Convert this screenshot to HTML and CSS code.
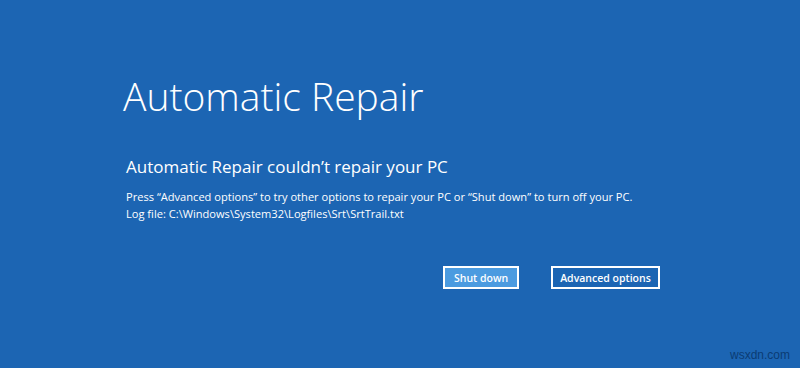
FILE: index.html
```html
<!DOCTYPE html>
<html>
<head>
<meta charset="utf-8">
<link rel="stylesheet" href="styles.css">
</head>
<body>
<main class="screen">
  <h1 class="title">Automatic Repair</h1>
  <h2 class="subtitle">Automatic Repair couldn’t repair your PC</h2>
  <p class="body">Press “Advanced options” to try other options to repair your PC or “Shut down” to turn off your PC.<br>Log file: C:\Windows\System32\Logfiles\Srt\SrtTrail.txt</p>
  <div class="actions">
    <button class="btn btn-primary">Shut down</button>
    <button class="btn">Advanced options</button>
  </div>
  <div class="watermark">wsxdn.com</div>
</main>
</body>
</html>
```
FILE: styles.css
```css
html, body {
  margin: 0;
  padding: 0;
}
body {
  width: 800px;
  height: 368px;
  overflow: hidden;
  background: #1c65b3;
  font-family: "Open Sans", "Noto Sans", sans-serif;
  color: #ffffff;
}
.screen {
  position: relative;
  height: 368px;
  box-sizing: border-box;
  padding: 70px 0 0 123px;
}
.title {
  margin: 0;
  font-weight: 300;
  font-size: 39px;
  line-height: 52px;
  letter-spacing: 0;
}
.subtitle {
  margin: 33px 0 0 3px;
  font-weight: 400;
  font-size: 17px;
  line-height: 24px;
}
.body {
  margin: 9px 0 0 3px;
  font-size: 11.1px;
  line-height: 17px;
}
.actions {
  display: flex;
  gap: 32px;
  margin: 44px 0 0 320px;
}
.btn {
  box-sizing: border-box;
  height: 23px;
  padding: 0 7px;
  border: 2px solid #ffffff;
  background: #1c65b3;
  color: #ffffff;
  font-family: "Open Sans", "Noto Sans", sans-serif;
  font-weight: 600;
  font-size: 10.5px;
}
.btn-primary {
  background: #4b9be0;
  padding: 0 9px;
}
.watermark {
  position: absolute;
  right: 10px;
  bottom: 6px;
  color: #0b3c74;
  font-family: "Liberation Sans", Arial, sans-serif;
  font-size: 12px;
}
```
